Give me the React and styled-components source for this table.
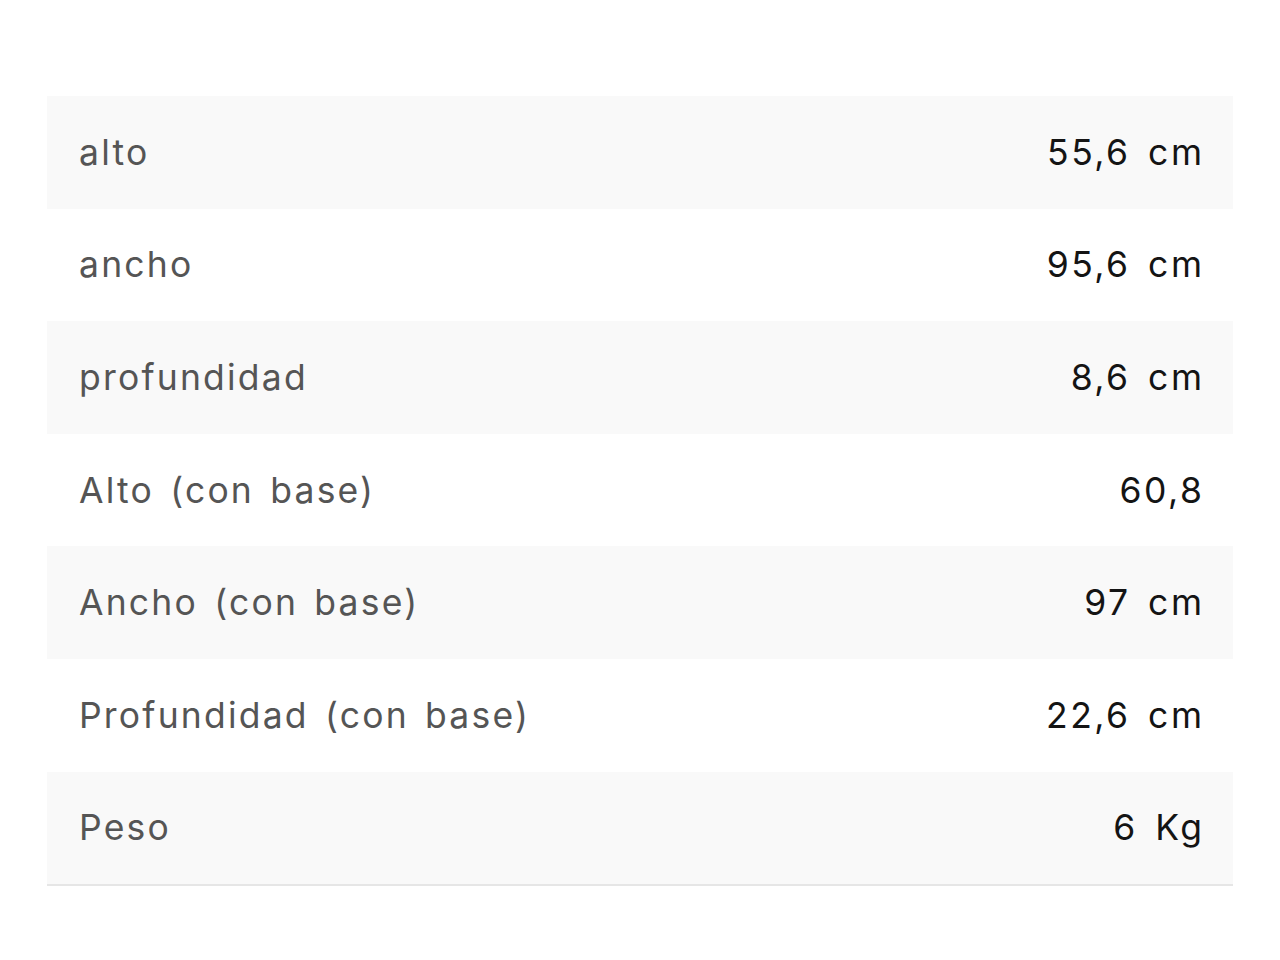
import React from 'react'
import styled, { createGlobalStyle } from 'styled-components'

const GlobalStyle = createGlobalStyle`
  body {
    margin: 0;
    background: #fff;
    font-family: 'Inter', 'Open Sans', sans-serif;
  }
`

const Page = styled.div`
  padding: 96px 47px 0 47px;
`
const Table = styled.div`
  display: flex;
  flex-direction: column;
  border-bottom: 2px solid #e6e6e6;
`
const Row = styled.div`
  display: flex;
  justify-content: space-between;
  align-items: center;
  height: 112.6px;
  padding: 0 31px 0 32px;
  background-color: ${props => (props.$shaded ? '#f9f9f9' : '#fff')};
`
const Label = styled.span`
  font-size: 35.5px;
  color: #555;
  letter-spacing: 2.2px;
  word-spacing: 4px;
`
const Value = styled.span`
  font-size: 35.5px;
  color: #141414;
  letter-spacing: 2.5px;
  word-spacing: 5px;
  margin-right: -2.5px;
`

const specs = [
  ['alto', '55,6 cm'],
  ['ancho', '95,6 cm'],
  ['profundidad', '8,6 cm'],
  ['Alto (con base)', '60,8'],
  ['Ancho (con base)', '97 cm'],
  ['Profundidad (con base)', '22,6 cm'],
  ['Peso', '6 Kg']
]

const App = () => (
  <Page>
    <GlobalStyle />
    <Table>
      {specs.map(([label, value], i) => (
        <Row key={label} $shaded={i % 2 === 0}>
          <Label>{label}</Label>
          <Value>{value}</Value>
        </Row>
      ))}
    </Table>
  </Page>
)

export default App
